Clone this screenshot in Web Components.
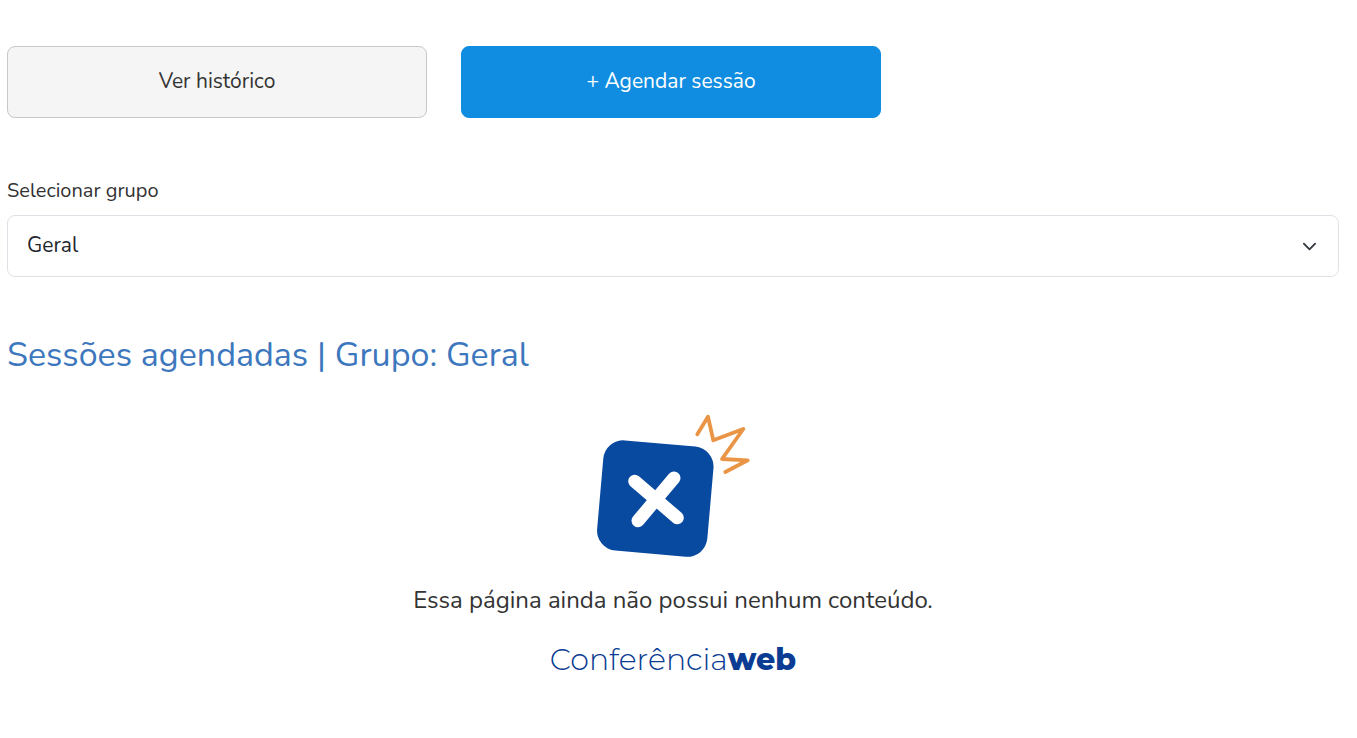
<!DOCTYPE html>
<html lang="pt-BR">
<head>
<meta charset="utf-8">
<meta name="viewport" content="width=device-width, initial-scale=1">
<title>Sessões agendadas</title>
<style>
body { margin: 0; background: #fff; color: #333; font-family: Nunito, "Open Sans", sans-serif; }
</style>
</head>
<body>
<sessions-page></sessions-page>
<script>
const define = (name, html) => {
  const template = document.createElement('template');
  template.innerHTML = html;
  customElements.define(name, class extends HTMLElement {
    constructor() {
      super();
      this.attachShadow({ mode: 'open' }).append(template.content.cloneNode(true));
    }
  });
};

define('action-button', `
<style>
:host { display: block; flex: 0 1 420px; min-width: 0; }
button { box-sizing: border-box; width: 100%; height: 72px; padding: 0 16px 2px; border: 1px solid #c8c8c8; border-radius: 8px;
  background: #f5f5f5; color: #333; font: inherit; font-size: 21px; line-height: 28px; cursor: pointer; }
:host([primary]) button { background: #108de0; border-color: #108de0; color: #fff; }
</style>
<button type="button"><slot></slot></button>`);

define('group-select', `
<style>
:host { display: block; }
label { display: block; font-size: 20px; line-height: 28px; margin-bottom: 10px; }
.field { display: grid; align-items: center; }
.field > * { grid-area: 1 / 1; }
select { appearance: none; box-sizing: border-box; width: 100%; height: 62px; padding: 0 56px 2px 19px; border: 1px solid #dee2e6;
  border-radius: 8px; background: #fff; color: #212529; font: inherit; font-size: 21px; }
svg { justify-self: end; margin-right: 22px; width: 15px; height: 15px; pointer-events: none; }
</style>
<label for="group">Selecionar grupo</label>
<div class="field">
  <select id="group"><option>Geral</option></select>
  <svg viewBox="0 0 16 16" fill="none" stroke="#343a40" stroke-width="2" stroke-linecap="round" stroke-linejoin="round" aria-hidden="true"><path d="m2 5 6 6 6-6"/></svg>
</div>`);

define('brand-logo', `
<style>
:host { display: block; color: #0a3c93; font-family: Montserrat, Lato, sans-serif; font-size: 30px; line-height: 40px; font-weight: 300; }
b { font-weight: 800; }
</style>
<span>Conferência<b>web</b></span>`);

define('empty-state', `
<style>
:host { display: flex; flex-direction: column; align-items: center; text-align: center; }
svg { width: 153px; height: 142px; overflow: visible; }
p { margin: 25px 0 22px; font-size: 24px; line-height: 36px; }
</style>
<svg viewBox="0 0 153 142" fill="none" stroke-linecap="round" stroke-linejoin="round" aria-hidden="true">
  <rect x="3" y="28.3" width="110.6" height="110.6" rx="20" fill="#084a9f" transform="rotate(5 58.3 83.6)"/>
  <path d="M37.7 66.3 80.3 102.7M77 63 41 105.7" stroke="#fff" stroke-width="13"/>
  <path d="M100.3 19.3 111 1.7l5.3 23.6 30-11.3L125 44l25.7 1.3L128.3 57" stroke="#ea9446" stroke-width="3.8"/>
</svg>
<p><slot></slot></p>
<brand-logo></brand-logo>`);

define('sessions-page', `
<style>
:host { display: block; padding: 46px 18px 40px 7px; }
nav { display: flex; gap: 34px; margin-bottom: 59px; }
h1 { margin: 54px 0 36px; color: #3d77bd; font-size: 34px; line-height: 48px; font-weight: 400; }
</style>
<nav aria-label="Ações">
  <action-button>Ver histórico</action-button>
  <action-button primary>+ Agendar sessão</action-button>
</nav>
<group-select></group-select>
<h1>Sessões agendadas | Grupo: Geral</h1>
<empty-state>Essa página ainda não possui nenhum conteúdo.</empty-state>`);
</script>
</body>
</html>
